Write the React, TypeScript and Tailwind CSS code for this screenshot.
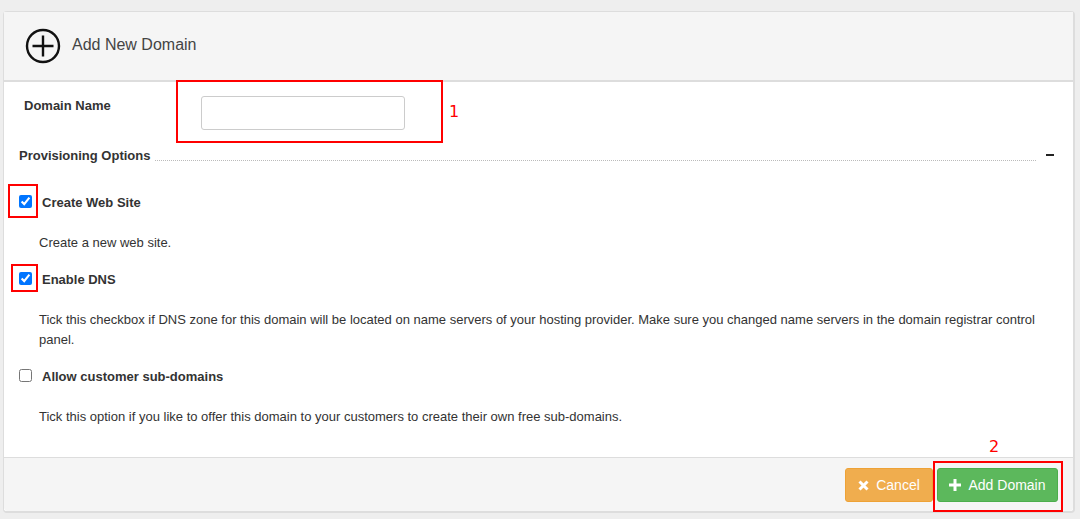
const FONT = "font-['Liberation_Sans',Arial,sans-serif]"

function Mark({ className }: { className: string }) {
  return <div className={`pointer-events-none absolute border-2 border-[#f00] ${className}`} />
}

function Option({
  label,
  checked,
  className,
}: {
  label: string
  checked?: boolean
  className?: string
}) {
  return (
    <label className={`flex h-5 items-center ${className ?? ''}`}>
      <input type="checkbox" defaultChecked={checked} className="mb-1 ml-[15px] h-[13px] w-[13px]" />
      <span className="ml-[10px] font-bold">{label}</span>
    </label>
  )
}

export default function App() {
  return (
    <div className={`relative h-[519px] w-[1080px] overflow-hidden bg-[#eee] pt-[11px] pl-[3px] text-[13px] leading-5 text-[#333] ${FONT}`}>
      <div className="flex h-[502px] w-[1072px] flex-col rounded-[4px] border border-r-2 border-b-2 border-[#ddd] bg-white">
        <header className="flex h-[70px] shrink-0 items-center border-b-2 border-[#ddd] bg-[#f5f5f5] pl-[21px]">
          <svg width="36" height="36" viewBox="0 0 36 36" fill="none" stroke="#111" strokeWidth="2.4">
            <circle cx="18" cy="18" r="16" />
            <path d="M18 7.5v21M7.5 18h21" />
          </svg>
          <h1 className="mb-[2px] ml-[11px] text-[16px] text-[#444]">Add New Domain</h1>
        </header>

        <main className="flex-1">
          <div className="flex h-[64px] pt-[14px] pl-5">
            <span className="w-[177px] font-bold">Domain Name</span>
            <input type="text" className="h-[34px] w-[204px] rounded-[3px] border border-[#ccc] bg-white" />
          </div>
          <div className="flex h-5 items-center pr-[19px] pl-[15px]">
            <span className="font-bold">Provisioning Options</span>
            <div className="mt-2 ml-[5px] flex-1 border-b border-dotted border-[#bbb]" />
            <div className="mb-[2px] ml-[10px] h-[2px] w-2 bg-[#222]" />
          </div>
          <Option label="Create Web Site" checked className="mt-[27px]" />
          <p className="mt-5 pl-[35px]">Create a new web site.</p>
          <Option label="Enable DNS" checked className="mt-[17px]" />
          <p className="mt-5 pr-4 pl-[35px]">
            Tick this checkbox if DNS zone for this domain will be located on name servers of your hosting provider. Make sure you changed name servers in the domain registrar control panel.
          </p>
          <Option label="Allow customer sub-domains" className="mt-[17px]" />
          <p className="mt-5 pl-[35px]">Tick this option if you like to offer this domain to your customers to create their own free sub-domains.</p>
        </main>

        <footer className="flex h-[54px] shrink-0 items-start justify-end gap-1 rounded-b-[4px] border-t border-[#ddd] bg-[#f5f5f5] pt-[10px] pr-[15px]">
          <button className="flex h-[34px] w-[88px] items-center justify-center gap-[7px] rounded-[3px] border border-[#eea236] bg-[#f0ad4e] text-[14px] text-white">
            <svg width="11" height="11" viewBox="0 0 11 11" stroke="#fff" strokeWidth="3">
              <path d="M1.5 1.5l8 8M9.5 1.5l-8 8" />
            </svg>
            Cancel
          </button>
          <button className="flex h-[34px] w-[121px] items-center justify-center gap-[7px] rounded-[3px] border border-[#4cae4c] bg-[#5cb85c] text-[14px] text-white">
            <svg width="12" height="12" viewBox="0 0 12 12" stroke="#fff" strokeWidth="3">
              <path d="M6 0v12M0 6h12" />
            </svg>
            Add Domain
          </button>
        </footer>
      </div>

      <Mark className="top-[80px] left-[176px] h-[63px] w-[267px]" />
      <Mark className="top-[184px] left-[8px] h-[34px] w-[30px]" />
      <Mark className="top-[264px] left-[11px] h-[28px] w-[27px]" />
      <Mark className="top-[461px] left-[933px] h-[51px] w-[130px]" />
      <span className="absolute top-[102px] left-[449px] font-['DejaVu_Sans',sans-serif] text-[16px] text-[#f00]">1</span>
      <span className="absolute top-[437px] left-[989px] font-['DejaVu_Sans',sans-serif] text-[16px] text-[#f00]">2</span>
    </div>
  )
}
